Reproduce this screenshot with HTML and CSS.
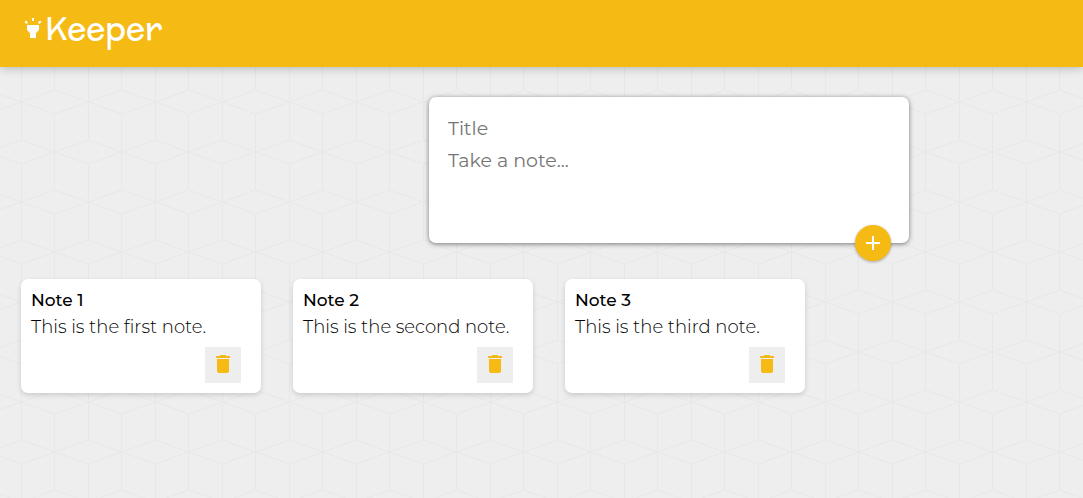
FILE: index.html
```html
<!DOCTYPE html>
<html lang="en">
<head>
  <meta charset="utf-8">
  <meta name="viewport" content="width=device-width, initial-scale=1">
  <title>Keeper</title>
  <link rel="stylesheet" href="styles.css">
</head>
<body>
  <svg class="symbols" aria-hidden="true">
    <symbol id="trash" viewBox="0 0 24 24"><path d="M6 19c0 1.1.9 2 2 2h8c1.1 0 2-.9 2-2V7H6v12zM19 4h-3.5l-1-1h-5l-1 1H5v2h14V4z"/></symbol>
  </svg>
  <header class="header">
    <h1 class="brand">
      <svg class="icon" viewBox="0 0 24 24" aria-hidden="true"><path d="M6 14l3 3v5h6v-5l3-3V9H6zm5-12h2v3h-2zM3.5 5.875L4.914 4.46l2.12 2.122L5.62 7.997zm13.46.71l2.123-2.12 1.414 1.414L18.375 8z"/></svg>
      <span>Keeper</span>
    </h1>
  </header>
  <main>
    <div class="create-area">
      <form class="create-note">
        <input class="field" type="text" name="title" placeholder="Title" aria-label="Title">
        <textarea class="field" name="content" rows="3" placeholder="Take a note..." aria-label="Take a note"></textarea>
        <button class="add" type="button" aria-label="Add note">
          <svg class="icon" viewBox="0 0 24 24" aria-hidden="true"><path d="M19 13h-6v6h-2v-6H5v-2h6V5h2v6h6v2z"/></svg>
        </button>
      </form>
    </div>
    <section class="notes" aria-label="Notes">
      <article class="note">
        <h2 class="note-title">Note 1</h2>
        <p class="note-text">This is the first note.</p>
        <button class="delete" type="button" aria-label="Delete Note 1"><svg class="icon" aria-hidden="true"><use href="#trash"/></svg></button>
      </article>
      <article class="note">
        <h2 class="note-title">Note 2</h2>
        <p class="note-text">This is the second note.</p>
        <button class="delete" type="button" aria-label="Delete Note 2"><svg class="icon" aria-hidden="true"><use href="#trash"/></svg></button>
      </article>
      <article class="note">
        <h2 class="note-title">Note 3</h2>
        <p class="note-text">This is the third note.</p>
        <button class="delete" type="button" aria-label="Delete Note 3"><svg class="icon" aria-hidden="true"><use href="#trash"/></svg></button>
      </article>
    </section>
  </main>
</body>
</html>
```
FILE: styles.css
```css
* {
  box-sizing: border-box;
  margin: 0;
  padding: 0;
}

body {
  min-height: 100vh;
  background-color: #eee;
  background-image: url("data:image/svg+xml,%3Csvg xmlns='http://www.w3.org/2000/svg' width='67' height='100'%3E%3Cg fill='none' stroke='%23e7e7e7'%3E%3Cpath d='M.5 25L33.5 13L67.5 25L33.5 37ZM.5 63L33.5 75L.5 87M67.5 63L33.5 75L67.5 87M33.5 0V13M33.5 37V100M.5 0V63M.5 87V100'/%3E%3C/g%3E%3C/svg%3E");
  background-position: 21px 77px;
  font-family: Montserrat, Inter, sans-serif;
  font-weight: 300;
  color: #000;
}

button,
input,
textarea {
  border: none;
  font: inherit;
}

.symbols {
  display: none;
}

.icon {
  display: block;
  width: 24px;
  height: 24px;
  fill: currentColor;
}

.header {
  padding: 4px 21px 15px;
  background: #f5ba13;
  box-shadow: 0 0 10px rgba(0, 0, 0, 0.3);
}

.brand {
  display: flex;
  align-items: center;
  color: #fff;
  font-family: McLaren, Inter, sans-serif;
  font-size: 32px;
  font-weight: 600;
  line-height: 48px;
}

.create-area {
  padding: 30px 0 36px 255px;
}

.create-note {
  position: relative;
  display: flex;
  flex-direction: column;
  width: 480px;
  max-width: 100%;
  margin: 0 auto;
  padding: 16px 15px 14px;
  background: #fff;
  border-radius: 7px;
  box-shadow: 0 1px 5px rgba(0, 0, 0, 0.5);
}

.field {
  width: 100%;
  padding: 4px;
  background: transparent;
  outline: none;
  font-size: 19px;
  font-weight: 400;
  line-height: 24px;
  resize: none;
}

.field::placeholder {
  color: #757575;
}

textarea.field {
  height: 84px;
}

.add {
  position: absolute;
  right: 18px;
  bottom: -18px;
  width: 36px;
  height: 36px;
  padding: 6px;
  border-radius: 50%;
  background: #f5ba13;
  color: #fff;
  box-shadow: 0 1px 3px rgba(0, 0, 0, 0.3);
  cursor: pointer;
}

.notes {
  display: flex;
  flex-wrap: wrap;
  gap: 32px;
  padding: 0 21px;
}

.note {
  display: flex;
  flex-direction: column;
  width: 240px;
  padding: 10px;
  background: #fff;
  border-radius: 7px;
  box-shadow: 0 2px 5px rgba(0, 0, 0, 0.15);
}

.note-title {
  margin-bottom: 6px;
  font-size: 17px;
  font-weight: 500;
  line-height: 22px;
}

.note-text {
  margin-bottom: 10px;
  font-size: 18px;
  line-height: 20px;
}

.delete {
  align-self: flex-end;
  width: 36px;
  height: 36px;
  margin-right: 10px;
  padding: 5px 6px 7px;
  background: #eee;
  color: #f5ba13;
  cursor: pointer;
}
```
